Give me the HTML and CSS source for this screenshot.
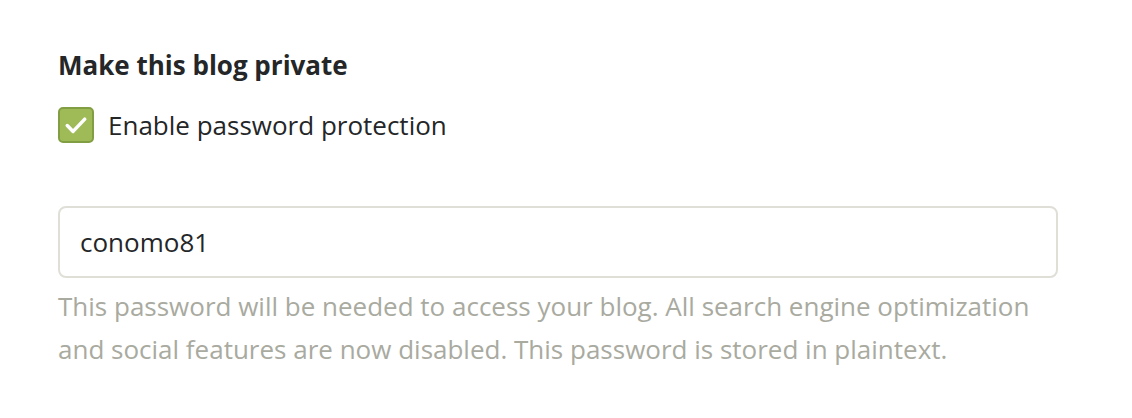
FILE: index.html
```html
<!DOCTYPE html>
<html lang="en">

<head>
    <meta charset="UTF-8">
    <title>Blog privacy</title>
    <link rel="stylesheet" href="styles.css">
</head>

<body>
    <div class="form-group">
        <h3 class="group-title">Make this blog private</h3>

        <label class="checkbox">
            <span class="check-box">
                <svg viewBox="0 0 24 24" width="28" height="28">
                    <path d="M4.5 12.5l5 5L19.5 7" fill="none" stroke="#fff" stroke-width="3" stroke-linecap="round" stroke-linejoin="round"/>
                </svg>
            </span>
            <span class="check-label">Enable password protection</span>
        </label>

        <input class="text-input" type="text" value="conomo81">
        <p class="help">This password will be needed to access your blog. All search engine optimization and social features are now disabled. This password is stored in plaintext.</p>
    </div>
</body>
</html>
```

FILE: styles.css
```css
body {
    margin: 0;
    background-color: #fff;
    font-family: "Open Sans", sans-serif;
    color: #242628;
}

.form-group {
    padding: 47px 58px 0;
    width: 1000px;
}

.group-title {
    margin: 0 0 24px;
    font-size: 26px;
    font-weight: 700;
    line-height: 36px;
}

.checkbox {
    display: flex;
    align-items: center;
    gap: 14px;
    cursor: pointer;
}

.check-box {
    display: flex;
    flex-shrink: 0;
    align-items: center;
    justify-content: center;
    width: 32px;
    height: 32px;
    background-color: #9fbb58;
    border: 2px solid #819f42;
    border-radius: 5px;
}

.check-label {
    font-size: 26px;
    line-height: 36px;
}

.text-input {
    display: block;
    box-sizing: border-box;
    width: 1000px;
    height: 72px;
    margin-top: 63px;
    padding: 0 20px;
    border: 2px solid #e0dfd7;
    border-radius: 8px;
    font-family: "Open Sans", sans-serif;
    font-size: 26px;
    color: #242628;
    outline: none;
}

.help {
    margin: 7px 0 0;
    font-size: 26px;
    line-height: 43px;
    color: #a9aaa0;
}
```
